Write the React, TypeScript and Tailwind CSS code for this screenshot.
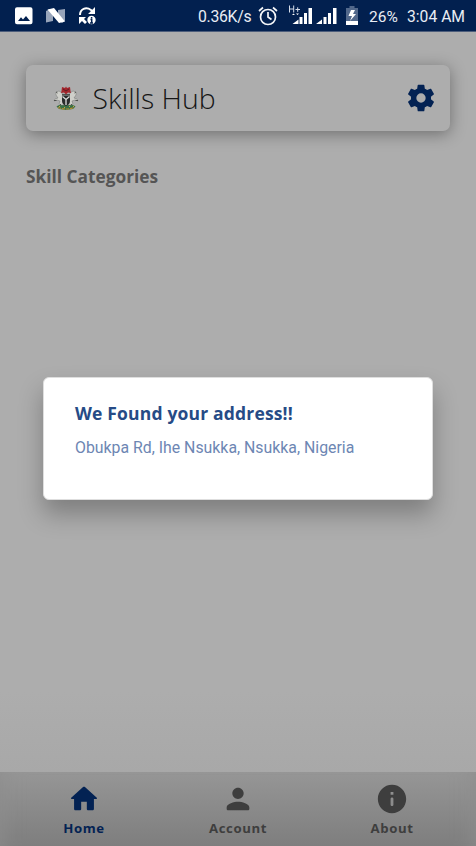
import React from 'react';

function StatusBar() {
  return (
    <header className="flex h-8 items-center whitespace-nowrap border-b border-[#4c5d7b] bg-[#02204f] pl-[15px] font-['Roboto',sans-serif] text-[16px] leading-[32px] text-[#e9edf4]">
      <svg className="size-[18px] shrink-0" viewBox="0 0 18 18" fill="#fff">
        <path fillRule="evenodd" d="M2 .2h13.500a2 2 0 0 1 2 2v13a2 2 0 0 1-2 2H2a2 2 0 0 1-2-2v-13a2 2 0 0 1 2-2ZM3 14h12l-4-5-3 3.500-2-2.300Z" />
      </svg>
      <svg className="ml-[13px] h-4 w-[20px] shrink-0" viewBox="0 0 20 16">
        <path fill="#97a4ba" d="M0 3 4 1l3 4v8l-7 1.500ZM12 2l7-1v12l-3 2-4-4Z" />
        <path fill="#fff" d="M1.500 1.500 8 0l11 13.500-6 1.500Z" />
      </svg>
      <svg className="ml-[12px] size-[19px] shrink-0" viewBox="0 0 19 19" fill="none" stroke="#fff" strokeWidth="2">
        <path d="M2 9C2 3 8 .5 13 4l2 2" />
        <path fill="#fff" stroke="none" d="M17 1v7h-7ZM1 11h7L6 13l3 3-2 2-3-3-3 3Z" />
        <circle cx="13.500" cy="14" r="4.200" fill="#fff" stroke="none" />
        <path stroke="#02204f" strokeWidth="1.500" d="M13.600 11v1.400M12.500 13.500h1.200V17M12 17h3" />
      </svg>
      <span className="ml-[101px] mt-[2px] w-[53px] text-[15.8px] tracking-[-0.3px]">0.36K/s</span>
      <svg className="ml-[7px] size-5 shrink-0" viewBox="0 0 20 20" fill="none" stroke="#f3f5f8" strokeWidth="1.700">
        <circle cx="10" cy="11" r="7.500" />
        <path d="M10 6v5l3.500 2.500M1 5l4-3.500M15 1.500 19 5" />
      </svg>
      <svg className="ml-[10px] h-[22px] w-[49px] shrink-0" viewBox="0 0 49 22" fill="#fff">
        <path fill="none" stroke="#d7deea" strokeWidth="1" d="M1.500.5v7M5.700.5v7M1.500 4h4.200M7.500 4.500h4.500M9.700 2.300v4.500" />
        <path d="M4 10l1.500-1.500L7 10ZM8 8.500h3L9.500 10ZM4.500 19l6-4.500V19ZM11.500 12h3v7h-3ZM16 8h3v11h-3ZM20.500 3H24v16h-3.500ZM28 19l6-4.500V19ZM35.500 12h3v7h-3ZM40 8h3v11h-3ZM45 3h3.500v16H45Z" />
      </svg>
      <svg className="ml-[9px] h-[19px] w-3 shrink-0" viewBox="0 0 12 19">
        <path fill="#52688b" d="M3.500 0h5v2H12v17H0V2h3.500Z" />
        <path fill="#fff" d="M0 15h12v4H0ZM5 4 2.500 10H6l-2 5 6-7H7l2-4Z" />
      </svg>
      <span className="ml-[11px] mt-[2px] w-[38px] text-[15.500px]">26%</span>
      <span className="mt-[2px] text-[15.700px]">3:04 AM</span>
    </header>
  );
}

function CoatOfArms() {
  return (
    <svg className="h-6 w-[26px] shrink-0" viewBox="0 0 26 24">
      <path fill="#397044" d="M3.500 20.500c3-3 16-3 19 0L20 23l-7 1-7-1Z" />
      <path fill="none" stroke="#b48a32" strokeWidth="1.200" strokeDasharray="3 1" d="M5 21.500c5 2 11 2 16 0" />
      <g fill="#cfcfca" stroke="#777976" strokeWidth=".5">
        <path d="m8 19-2-1 1-3-3-1-3 1 1-2 3-1-2-3 0-3 3-1 3 2 2 5 1 7Z" />
        <path d="m18 19 2-1-1-3 3-1 3 1-1-2-3-1 2-3 0-3-3-1-3 2-2 5-1 7Z" />
      </g>
      <path fill="#292b2b" d="M9 9.500h8v5.500c0 3-2 4-4 5-2-1-4-2-4-5Z" />
      <path fill="none" stroke="#ddd" strokeWidth="1.300" d="m9.500 10.500 3.500 3 3.500-3M13 13.500V19" />
      <path fill="#a3262d" d="m9 1 3 1 1-1.500L14 2l3-1 .5 4L18 7l-3-.5-2 2-2-2L8 7l.5-2Z" />
      <path fill="none" stroke="#401a20" strokeWidth=".7" d="m10 3 3 2 3-2" />
      <path fill="none" stroke="#464845" strokeWidth=".9" d="M9 8.500h8M3 6l1.500 1M23 6l-1.500 1M1 14.500h2.500M22.500 14.500H25M7 18l1 1M19 18l-1 1" />
      <path fill="#c1a645" d="M6 20h1v1H6ZM11 21h1v1h-1ZM16 20h1v1h-1ZM20 20h1v1h-1Z" />
    </svg>
  );
}

const TABS = [
  {
    label: 'Home',
    color: 'text-[#032253]',
    path: 'M10 19v-5h4v5c0 .55.45 1 1 1h3c.55 0 1-.45 1-1v-7h1.700c.46 0 .68-.57.33-.87L12.670 3.600c-.38-.34-.96-.34-1.340 0l-8.360 7.530c-.34.3-.13.87.33.87H5v7c0 .55.45 1 1 1h3c.55 0 1-.45 1-1z',
  },
  {
    label: 'Account',
    color: 'text-[#3e3e3e]',
    path: 'M12 12c2.210 0 4-1.790 4-4s-1.790-4-4-4-4 1.790-4 4 1.790 4 4 4zm0 2c-2.670 0-8 1.340-8 4v1c0 .55.45 1 1 1h14c.55 0 1-.45 1-1v-1c0-2.660-5.330-4-8-4z',
  },
  {
    label: 'About',
    color: 'text-[#3e3e3e]',
    path: 'M12 2C6.480 2 2 6.480 2 12s4.480 10 10 10 10-4.480 10-10S17.520 2 12 2zm0 15c-.55 0-1-.45-1-1v-4c0-.55.45-1 1-1s1 .45 1 1v4c0 .55-.45 1-1 1zm1-8h-2V7h2v2z',
  },
];

export default function App() {
  return (
    <div className="flex h-[846px] w-[476px] flex-col overflow-hidden bg-[#adadad] font-['Open_Sans',sans-serif]">
      <StatusBar />
      <main className="flex flex-1 flex-col">
        <section className="ml-[26px] mt-[33px] flex h-[66px] w-[424px] items-center rounded-[7px] bg-[#adadad] pl-[27px] pr-[13.500px] shadow-[0_3px_16px_rgba(0,0,0,0.36)]">
          <CoatOfArms />
          <h1 className="ml-[13.500px] flex-1 text-[28.4px] font-light leading-[36px] text-[#161616]">Skills Hub</h1>
          <svg className="size-8" viewBox="0 0 24 24" fill="#032253">
            <path d="M12,15.5A3.5,3.5 0 0,1 8.5,12A3.5,3.5 0 0,1 12,8.5A3.5,3.5 0 0,1 15.5,12A3.5,3.5 0 0,1 12,15.5M19.43,12.97C19.47,12.65 19.5,12.33 19.5,12C19.5,11.67 19.47,11.34 19.43,11L21.54,9.37C21.73,9.22 21.78,8.95 21.66,8.73L19.66,5.27C19.54,5.05 19.27,4.96 19.05,5.05L16.56,6.05C16.04,5.66 15.5,5.32 14.87,5.07L14.5,2.42C14.46,2.18 14.25,2 14,2H10C9.75,2 9.54,2.18 9.5,2.42L9.13,5.07C8.5,5.32 7.96,5.66 7.44,6.05L4.95,5.05C4.73,4.96 4.46,5.05 4.34,5.27L2.34,8.73C2.21,8.95 2.27,9.22 2.46,9.37L4.57,11C4.53,11.34 4.5,11.67 4.5,12C4.5,12.33 4.53,12.65 4.57,12.97L2.46,14.63C2.27,14.78 2.21,15.05 2.34,15.27L4.34,18.73C4.46,18.95 4.73,19.03 4.95,18.95L7.44,17.94C7.96,18.34 8.5,18.68 9.13,18.93L9.5,21.58C9.54,21.82 9.75,22 10,22H14C14.25,22 14.46,21.82 14.5,21.58L14.87,18.93C15.5,18.67 16.04,18.34 16.56,17.94L19.05,18.95C19.27,19.03 19.54,18.95 19.66,18.73L21.66,15.27C21.78,15.05 21.73,14.78 21.54,14.63L19.43,12.97Z" />
          </svg>
        </section>
        <h2 className="ml-[26px] mt-[33px] text-[17.3px] font-bold leading-[25px] text-[#555]">Skill Categories</h2>
        <section className="ml-[43px] mt-[188px] h-[123px] w-[390px] rounded-[6px] border border-[#dedede] bg-white pl-[31px] pt-[23px] shadow-[0_14px_24px_rgba(0,0,0,0.27)]">
          <h2 className="text-[17.5px] font-bold leading-6 tracking-[0.17px] text-[#264b86]">We Found your address!!</h2>
          <p className="mt-[12px] font-['Roboto',sans-serif] text-[15.850px] leading-[22px] text-[#6d86b3]">Obukpa Rd, Ihe Nsukka, Nsukka, Nigeria</p>
        </section>
        <div className="mt-auto h-20 bg-linear-to-b from-[#adadad] to-[#a8a8a8]" />
      </main>
      <nav className="flex h-[74px] bg-linear-to-b from-[#969696] to-[#7e7e7e] px-[7px] pt-[10px] shadow-[inset_24px_0_24px_-24px_#8e8e8e,inset_-24px_0_24px_-24px_#8e8e8e]">
        {TABS.map((tab) => (
          <button key={tab.label} className={`flex w-[154px] flex-col items-center ${tab.color}`}>
            <svg className="size-[34px]" viewBox="0 0 24 24" fill="currentColor">
              <path d={tab.path} />
            </svg>
            <span className="mt-[2px] text-[13.2px] font-bold leading-[20px] tracking-[0.6px]">{tab.label}</span>
          </button>
        ))}
      </nav>
    </div>
  );
}
